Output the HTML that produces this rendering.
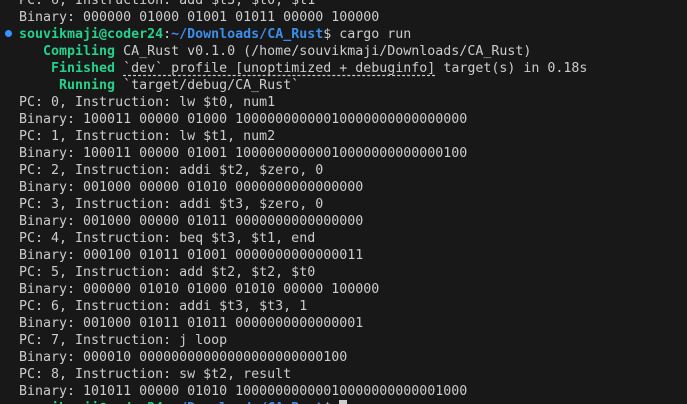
<!DOCTYPE html>
<html><head><meta charset="utf-8"><style>
html,body{margin:0;padding:0;background:#181818;width:687px;height:404px;overflow:hidden;position:relative}
#t{position:absolute;left:19px;top:-8.5px;font-family:"DejaVu Sans Mono","Liberation Mono",monospace;font-size:13.3px;line-height:17px;color:#cccccc;white-space:pre}
.g{color:#23d18b;font-weight:bold}
.b{color:#3b8eea;font-weight:bold}
.u{text-decoration:underline dashed;text-underline-offset:3px}
.dot{position:absolute;left:5px;top:30px;width:7px;height:7px;border-radius:50%;background:#3794ff}
.cur{display:inline-block;width:8px;height:15px;background:#cccccc;vertical-align:-3px}
</style></head><body>
<div class="dot"></div>
<div id="t">PC: 6, Instruction: add $t3, $t0, $t1
Binary: 000000 01000 01001 01011 00000 100000
<span class="g">souvikmaji@coder24</span>:<span class="b">~/Downloads/CA_Rust</span>$ cargo run
<span class="g">   Compiling</span> CA_Rust v0.1.0 (/home/souvikmaji/Downloads/CA_Rust)
<span class="g">    Finished</span> <span class="u">`dev` profile [unoptimized + debuginfo]</span> target(s) in 0.18s
<span class="g">     Running</span> `target/debug/CA_Rust`
PC: 0, Instruction: lw $t0, num1
Binary: 100011 00000 01000 10000000000010000000000000000
PC: 1, Instruction: lw $t1, num2
Binary: 100011 00000 01001 10000000000010000000000000100
PC: 2, Instruction: addi $t2, $zero, 0
Binary: 001000 00000 01010 0000000000000000
PC: 3, Instruction: addi $t3, $zero, 0
Binary: 001000 00000 01011 0000000000000000
PC: 4, Instruction: beq $t3, $t1, end
Binary: 000100 01011 01001 0000000000000011
PC: 5, Instruction: add $t2, $t2, $t0
Binary: 000000 01010 01000 01010 00000 100000
PC: 6, Instruction: addi $t3, $t3, 1
Binary: 001000 01011 01011 0000000000000001
PC: 7, Instruction: j loop
Binary: 000010 00000000000000000000000100
PC: 8, Instruction: sw $t2, result
Binary: 101011 00000 01010 10000000000010000000000001000
<span class="g">souvikmaji@coder24</span>:<span class="b">~/Downloads/CA_Rust</span>$ <span class="cur"></span></div>
</body></html>
